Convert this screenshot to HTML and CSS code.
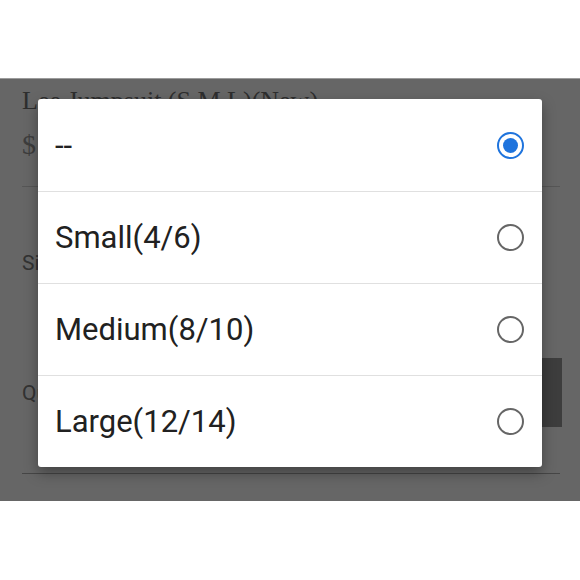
FILE: index.html
```html
<!DOCTYPE html>
<html>
<head>
<meta charset="utf-8">
<link rel="stylesheet" href="styles.css">
</head>
<body>
<div class="top"></div>
<div class="screen">
  <div class="product">
    <div class="title">Lee Jumpsuit (S,M,L)(New)</div>
    <div class="price">$</div>
    <div class="rule"></div>
    <div class="label size-label">Size</div>
    <div class="qty-row">
      <div class="label">Quantity</div>
      <div class="btn"></div>
    </div>
    <div class="rule rule-bottom"></div>
  </div>
  <div class="overlay"></div>
  <div class="dialog">
    <div class="opt"><span class="opt-text">--</span><span class="radio checked"></span></div>
    <div class="opt"><span class="opt-text">Small(4/6)</span><span class="radio"></span></div>
    <div class="opt"><span class="opt-text">Medium(8/10)</span><span class="radio"></span></div>
    <div class="opt"><span class="opt-text">Large(12/14)</span><span class="radio"></span></div>
  </div>
</div>
<div class="bottom"></div>
</body>
</html>
```

FILE: styles.css
```css
html, body {
  margin: 0;
  padding: 0;
  background: #ffffff;
}
body {
  width: 580px;
  height: 580px;
  overflow: hidden;
  font-family: Roboto, "Noto Sans", sans-serif;
}
.top {
  height: 78px;
  background: #fff;
}
.screen {
  position: relative;
  height: 423px;
  background: #fff;
  overflow: hidden;
}
.product {
  padding: 8px 20px 0 22px;
  color: #7a7a7a;
}
.title {
  font-family: "Liberation Serif", serif;
  font-size: 26px;
  line-height: 30px;
  white-space: nowrap;
  color: #747474;
}
.price {
  font-family: "Liberation Serif", serif;
  font-size: 28px;
  line-height: 30px;
  margin-top: 14px;
  color: #9a9a9a;
}
.rule {
  height: 1px;
  background: #d8d8d8;
  margin-top: 26px;
}
.label {
  font-size: 21px;
  line-height: 24px;
  color: #808080;
}
.size-label {
  margin-top: 64px;
}
.qty-row {
  display: flex;
  justify-content: space-between;
  align-items: center;
  margin-top: 83px;
}
.btn {
  width: 330px;
  height: 69px;
  background: #999;
  margin-right: -2px;
}
.rule-bottom {
  background: #b0b0b0;
  margin-top: 46px;
}
.overlay {
  position: absolute;
  inset: 0;
  background: rgba(0, 0, 0, 0.6);
  border-top: 1px solid rgba(255,255,255,0.35);
}
.dialog {
  position: absolute;
  left: 38px;
  top: 21px;
  width: 504px;
  background: #fff;
  border-radius: 3px;
  box-shadow: 0 6px 14px rgba(0,0,0,0.35);
  display: flex;
  flex-direction: column;
}
.opt {
  height: 91px;
  display: flex;
  align-items: center;
  justify-content: space-between;
  padding: 0 18px 0 17px;
  border-top: 1px solid #e0e0e0;
}
.opt:first-child {
  border-top: none;
  height: 92px;
}
.opt-text {
  font-size: 31px;
  color: #212121;
}
.radio {
  width: 23px;
  height: 23px;
  border: 2.6px solid #666;
  border-radius: 50%;
  position: relative;
}
.radio.checked {
  border-color: #1f74dd;
}
.radio.checked::after {
  content: "";
  position: absolute;
  left: 4px;
  top: 4px;
  width: 15px;
  height: 15px;
  border-radius: 50%;
  background: #1f74dd;
}
.bottom {
  height: 79px;
  background: #fff;
}
```
